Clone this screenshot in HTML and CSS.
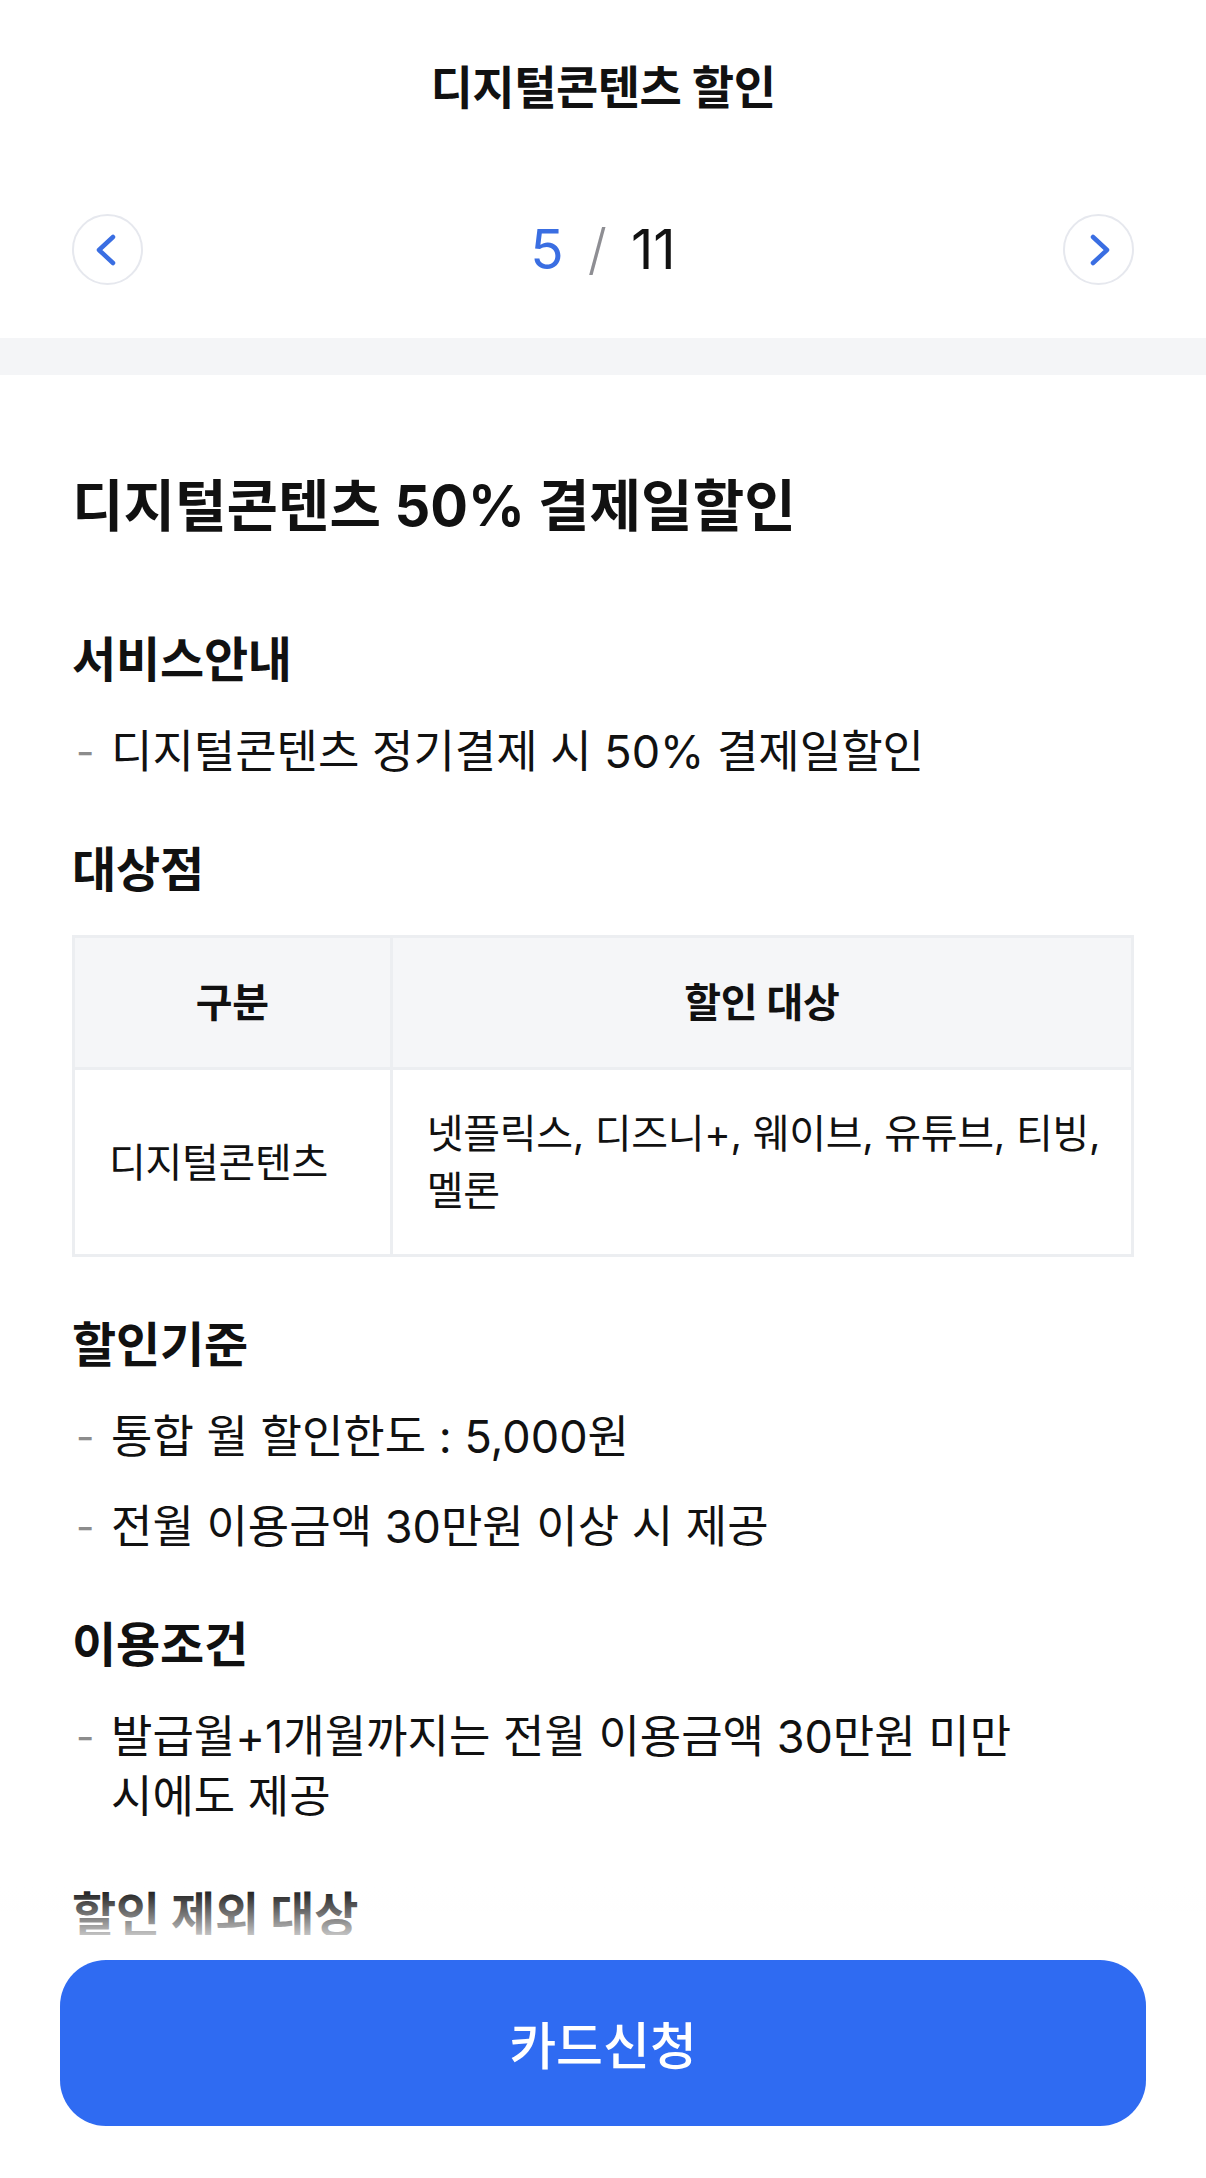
FILE: index.html
```html
<!DOCTYPE html>
<html lang="ko">
<head>
    <meta charset="UTF-8">
    <meta name="viewport" content="width=device-width, initial-scale=1.0">
    <title>디지털콘텐츠 할인</title>
    <link rel="stylesheet" href="styles.css">
</head>
<body>

<header class="top">
    <div class="title-bar">
        <h1 class="page-title">디지털콘텐츠 할인</h1>
    </div>
    <div class="pager">
        <button class="nav-btn" aria-label="이전">
            <svg width="67" height="67" viewBox="0 0 67 67"><polyline points="39,21 25,34 39,47"/></svg>
        </button>
        <div class="pager-count">
            <span class="current">5</span>
            <span class="sep">/</span>
            <span class="total">11</span>
        </div>
        <button class="nav-btn" aria-label="다음">
            <svg width="67" height="67" viewBox="0 0 67 67"><polyline points="28,21 42,34 28,47"/></svg>
        </button>
    </div>
</header>

<div class="band"></div>

<main class="content">
    <h2 class="benefit-title">디지털콘텐츠 50% 결제일할인</h2>

    <section class="section">
        <h3 class="section-title">서비스안내</h3>
        <ul class="dash-list">
            <li><span class="dash">-</span><span>디지털콘텐츠 정기결제 시 50% 결제일할인</span></li>
        </ul>
    </section>

    <section class="section">
        <h3 class="section-title">대상점</h3>
        <table class="shop-table">
            <thead>
                <tr>
                    <th class="col-type">구분</th>
                    <th>할인 대상</th>
                </tr>
            </thead>
            <tbody>
                <tr>
                    <td>디지털콘텐츠</td>
                    <td>넷플릭스, 디즈니+, 웨이브, 유튜브, 티빙, 멜론</td>
                </tr>
            </tbody>
        </table>
    </section>

    <section class="section">
        <h3 class="section-title">할인기준</h3>
        <ul class="dash-list">
            <li><span class="dash">-</span><span>통합 월 할인한도 : 5,000원</span></li>
            <li><span class="dash">-</span><span>전월 이용금액 30만원 이상 시 제공</span></li>
        </ul>
    </section>

    <section class="section">
        <h3 class="section-title">이용조건</h3>
        <ul class="dash-list">
            <li><span class="dash">-</span><span>발급월+1개월까지는 전월 이용금액 30만원 미만 시에도 제공</span></li>
        </ul>
    </section>

    <section class="section">
        <h3 class="section-title">할인 제외 대상</h3>
    </section>
</main>

<div class="bottom-bar">
    <button class="apply-btn">카드신청</button>
</div>

</body>
</html>
```

FILE: styles.css
```css
body {
    margin: 0;
    font-family: Inter, "Noto Sans CJK KR", sans-serif;
    color: #111;
    background-color: #fff;
}

.title-bar {
    height: 174px;
    display: flex;
    align-items: center;
    justify-content: center;
}

.page-title {
    margin: 0;
    font-size: 46px;
    font-weight: 700;
    letter-spacing: -0.5px;
    line-height: 60px;
}

.pager {
    height: 150px;
    padding: 0 72px 14px;
    display: flex;
    align-items: center;
    justify-content: space-between;
}

.nav-btn {
    width: 71px;
    height: 71px;
    padding: 0;
    border: 2px solid #e6e8ee;
    border-radius: 50%;
    background-color: #fff;
    display: flex;
    align-items: center;
    justify-content: center;
}

.nav-btn polyline {
    fill: none;
    stroke: #3a6ee2;
    stroke-width: 4.5;
    stroke-linecap: round;
    stroke-linejoin: round;
}

.pager-count {
    display: flex;
    align-items: center;
    gap: 24px;
    font-size: 55px;
    line-height: 60px;
}

.pager-count .current {
    color: #3a6ee2;
}

.pager-count .sep {
    color: #8e8e93;
    font-weight: 300;
}

.band {
    height: 37px;
    background-color: #f4f5f7;
}

.content {
    padding: 0 72px;
    display: flex;
    flex-direction: column;
}

.benefit-title {
    margin: 96px 0 31px;
    font-size: 56px;
    font-weight: 700;
    letter-spacing: 0;
    line-height: 70px;
}

.section {
    margin-top: 58px;
    display: flex;
    flex-direction: column;
    gap: 32px;
}

.section-title {
    margin: 0;
    font-size: 48px;
    font-weight: 700;
    letter-spacing: -0.2px;
    line-height: 60px;
}

.dash-list {
    list-style: none;
    margin: 0;
    padding: 0;
    display: flex;
    flex-direction: column;
    gap: 30px;
}

.dash-list li {
    display: flex;
    padding-right: 40px;
    font-size: 45px;
    line-height: 60px;
    word-break: keep-all;
}

.dash {
    flex: 0 0 39px;
    color: #8c8c8c;
    padding-left: 4px;
    box-sizing: border-box;
    font-size: 40px;
}

.shop-table {
    width: 100%;
    margin-top: 3px;
    border-collapse: collapse;
    border: 3px solid #eceef1;
    font-size: 40px;
    letter-spacing: -0.3px;
    line-height: 57px;
    word-break: keep-all;
}

.shop-table th,
.shop-table td {
    border: 3px solid #eceef1;
}

.shop-table th {
    height: 129px;
    padding: 0;
    background-color: #f5f6f8;
    font-weight: 700;
    text-align: center;
}

.shop-table .col-type {
    width: 30%;
}

.shop-table td {
    padding: 35px 12px 35px 34px;
    text-align: left;
    vertical-align: middle;
}

.bottom-bar {
    position: fixed;
    left: 0;
    right: 0;
    bottom: 0;
    padding: 25px 60px 52px;
    background-color: #fff;
}

.bottom-bar::before {
    content: "";
    position: absolute;
    left: 0;
    right: 0;
    top: -48px;
    height: 48px;
    background: linear-gradient(rgba(255, 255, 255, 0), rgba(255, 255, 255, 0.75));
}

.apply-btn {
    width: 100%;
    height: 166px;
    border: none;
    border-radius: 46px;
    background-color: #2f6bf2;
    color: #fff;
    font-family: Inter, "Noto Sans CJK KR", sans-serif;
    font-size: 51px;
    font-weight: 500;
}
```
